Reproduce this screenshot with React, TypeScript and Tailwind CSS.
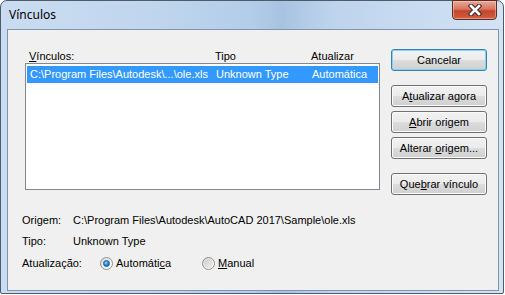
import React from "react";

const font = "font-['Liberation_Sans',Arial,sans-serif]";

function Btn({ children, def = false }: { children: React.ReactNode; def?: boolean }) {
  return (
    <div
      className={
        "w-[96px] h-[22px] rounded-[3px] border flex items-center justify-center text-[11px] leading-[13px] text-black " +
        (def
          ? "border-[#3c7fb1] bg-[linear-gradient(180deg,#f2f2f2_0%,#ebebeb_50%,#dddddd_51%,#cfcfcf_100%)] shadow-[inset_0_0_0_1px_#7fd4f7]"
          : "border-[#707070] bg-[linear-gradient(180deg,#f2f2f2_0%,#ebebeb_50%,#dddddd_51%,#cfcfcf_100%)] shadow-[inset_0_0_0_1px_#fbfbfb]")
      }
    >
      <span>{children}</span>
    </div>
  );
}

function U({ children }: { children: React.ReactNode }) {
  return <span className="underline underline-offset-[1px] decoration-1">{children}</span>;
}

function Radio({ checked }: { checked: boolean }) {
  return (
    <div className="w-[13px] h-[13px] rounded-full border border-[#8e8f8f] bg-[linear-gradient(135deg,#d6d6d6_0%,#f4f4f4_60%,#ffffff_100%)] flex items-center justify-center">
      {checked ? (
        <div className="w-[7px] h-[7px] rounded-full bg-[radial-gradient(circle_at_40%_35%,#9bd5ff_0%,#2f8be0_45%,#0e4f9a_100%)] border border-[#1a5a99]" />
      ) : (
        <div className="w-[9px] h-[9px] rounded-full bg-[linear-gradient(135deg,#cfcfcf_0%,#eeeeee_100%)]" />
      )}
    </div>
  );
}

export default function App() {
  return (
    <div className={"w-[505px] h-[295px] bg-white " + font}>
      <div className="w-[504px] h-[294px] flex flex-col rounded-t-[7px] rounded-b-[2px] border border-[#4e5b6b] bg-[linear-gradient(90deg,#cadcf1_0%,#c0d6ee_30%,#b3cce8_50%,#a8c3e1_56%,#bed4ec_66%,#c9dcf1_85%,#d4e3f4_100%)]">
        {/* Title bar */}
        <div className="h-[28px] flex items-start pl-[8px] pr-[6px]">
          <div className="mt-[6px] text-[12px] leading-[15px] text-black font-['Noto_Sans',sans-serif]">Vínculos</div>
          <div className="ml-auto -mt-[1px] w-[45px] h-[20px] rounded-b-[4px] border border-[#5d2b22] bg-[linear-gradient(180deg,#e9a99a_0%,#d7755f_45%,#c4442b_55%,#d0603f_100%)] shadow-[inset_0_0_0_1px_rgba(255,220,210,0.45)] flex items-center justify-center">
            <svg width="14" height="12" viewBox="0 0 14 12">
              <path d="M3 2 L11 10 M11 2 L3 10" stroke="#3a2a28" strokeWidth="4.6" strokeLinecap="square" />
              <path d="M3 2 L11 10 M11 2 L3 10" stroke="#ffffff" strokeWidth="2.6" strokeLinecap="square" />
            </svg>
          </div>
        </div>
        {/* Client */}
        <div className="ml-[6px] mr-[4px] h-[262px] border border-[#8194ad] bg-[#f0f0f0] flex flex-col text-[11px] leading-[13px] text-black">
          <div className="flex pl-[17px] pt-[19px]">
            <div className="flex flex-col w-[355px]">
              <div className="h-[14px] flex items-start">
                <div className="w-[190px] pl-[4px] pt-[1px]">
                  <U>V</U>ínculos:
                </div>
                <div className="w-[96px] pt-[1px]">Tipo</div>
                <div className="pt-[1px]">Atualizar</div>
              </div>
              <div className="h-[127px] border border-[#828790] bg-white pt-[2px] px-[1px]">
                <div className="h-[17px] bg-[#3399ff] text-white flex items-center">
                  <div className="w-[189px] pl-[3px]">C:\Program Files\Autodesk\...\ole.xls</div>
                  <div className="w-[96px]">Unknown Type</div>
                  <div>Automática</div>
                </div>
              </div>
            </div>
            <div className="ml-[11px] flex flex-col">
              <Btn def>Cancelar</Btn>
              <div className="mt-[14px] flex flex-col gap-[4px]">
                <Btn>
                  A<U>t</U>ualizar agora
                </Btn>
                <Btn>
                  <U>A</U>brir origem
                </Btn>
                <Btn>
                  Alterar <U>o</U>rigem...
                </Btn>
              </div>
              <div className="mt-[14px]">
                <Btn>
                  Que<U>b</U>rar vínculo
                </Btn>
              </div>
            </div>
          </div>
          <div className="pl-[14px] mt-[19px] flex flex-col">
            <div className="h-[13px] flex">
              <div className="w-[51px]">Origem:</div>
              <div>C:\Program Files\Autodesk\AutoCAD 2017\Sample\ole.xls</div>
            </div>
            <div className="mt-[8px] h-[13px] flex">
              <div className="w-[51px]">Tipo:</div>
              <div>Unknown Type</div>
            </div>
            <div className="mt-[8px] h-[14px] flex items-center">
              <div className="w-[78px]">Atualização:</div>
              <Radio checked />
              <div className="ml-[3px] w-[86px]">
                Automáti<U>c</U>a
              </div>
              <Radio checked={false} />
              <div className="ml-[3px]">
                <U>M</U>anual
              </div>
            </div>
          </div>
        </div>
      </div>
    </div>
  );
}
